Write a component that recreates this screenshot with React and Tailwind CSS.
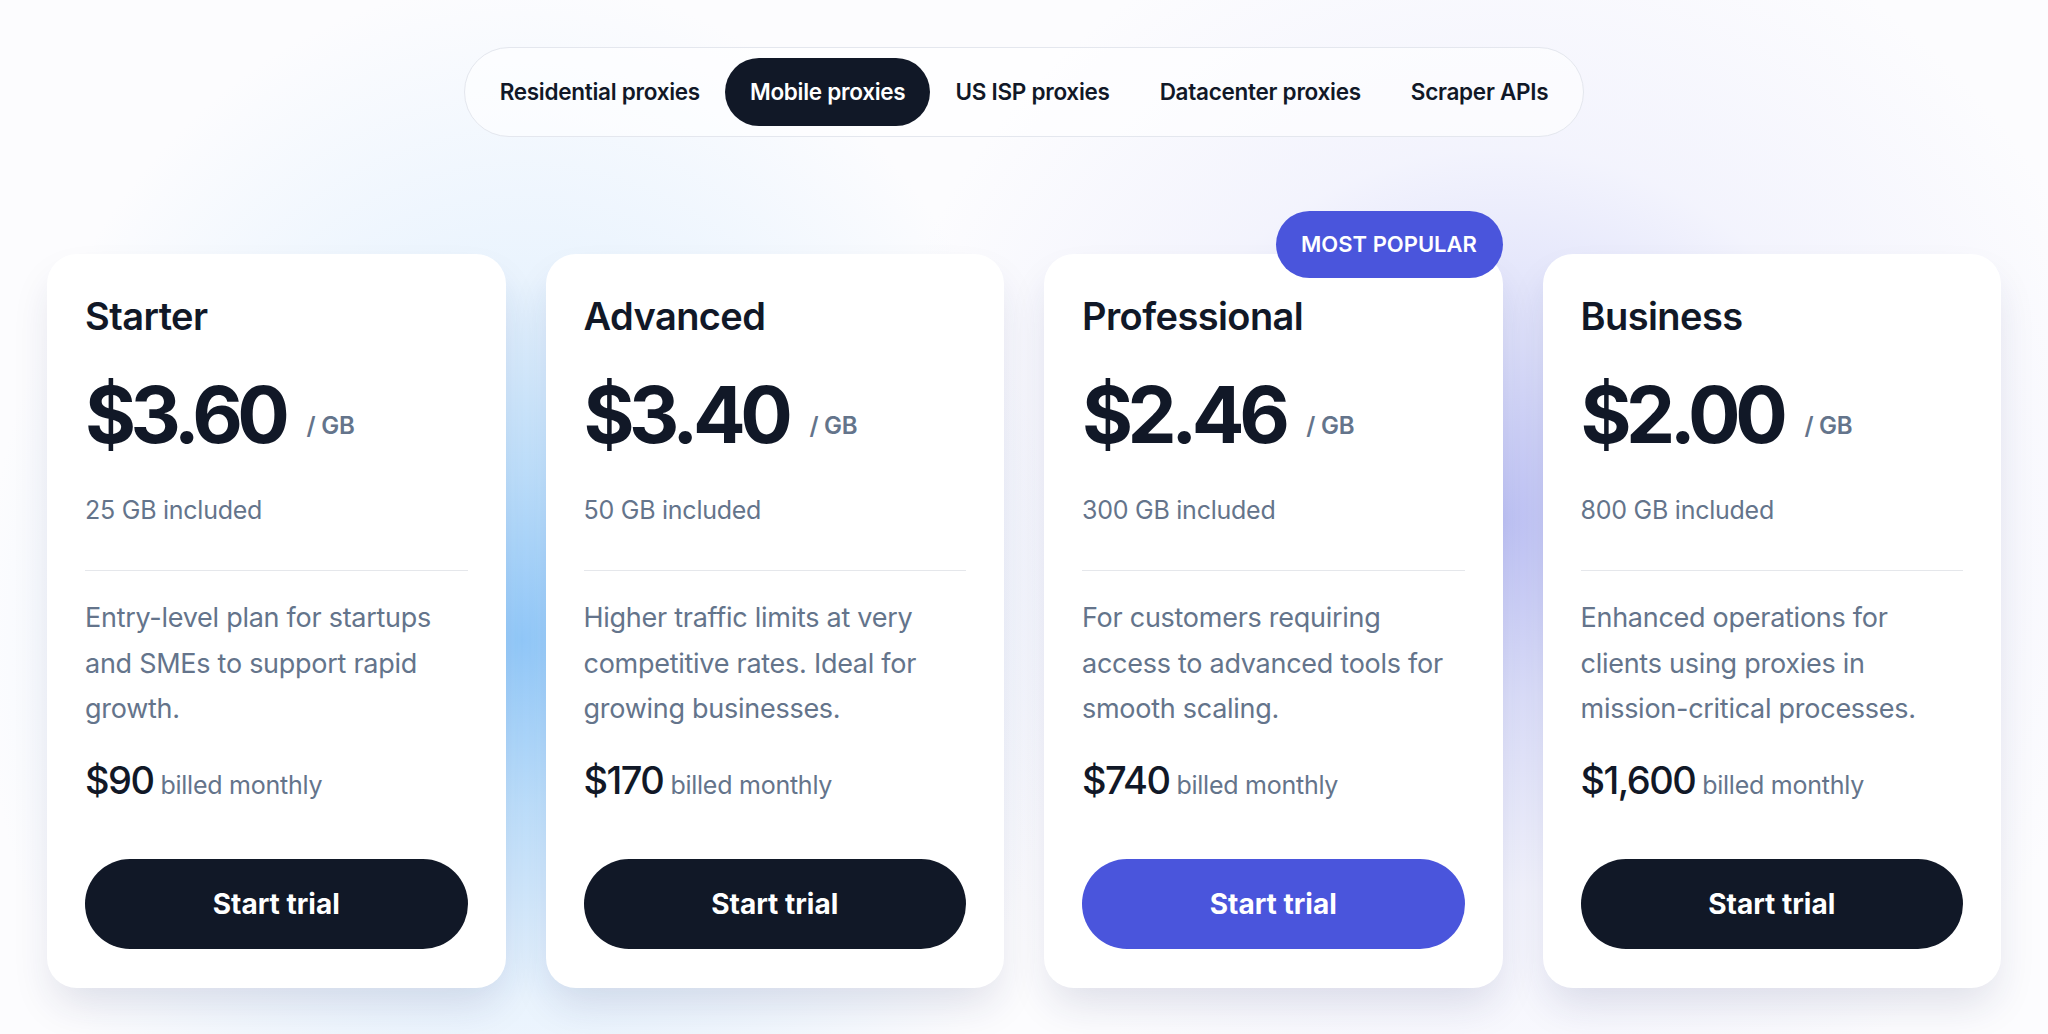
import React, { useState } from "react";

const tabs = ["Residential proxies", "Mobile proxies", "US ISP proxies", "Datacenter proxies", "Scraper APIs"];

const plans = [
  {
    name: "Starter",
    price: "$3.60",
    included: "25 GB included",
    lines: ["Entry-level plan for startups", "and SMEs to support rapid", "growth."],
    monthly: "$90",
  },
  {
    name: "Advanced",
    price: "$3.40",
    included: "50 GB included",
    lines: ["Higher traffic limits at very", "competitive rates. Ideal for", "growing businesses."],
    monthly: "$170",
  },
  {
    name: "Professional",
    price: "$2.46",
    included: "300 GB included",
    lines: ["For customers requiring", "access to advanced tools for", "smooth scaling."],
    monthly: "$740",
    popular: true,
  },
  {
    name: "Business",
    price: "$2.00",
    included: "800 GB included",
    lines: ["Enhanced operations for", "clients using proxies in", "mission-critical processes."],
    monthly: "$1,600",
  },
];

const PlanCard = ({ plan }) => {
  return (
    <div className="relative flex flex-col rounded-[30px] bg-white px-[38px] pt-[40px] pb-[39px] shadow-[0_22px_40px_-6px_rgba(30,40,90,0.13)]">
      {plan.popular && (
        <div className="absolute right-0 -top-[43px] flex h-[67px] w-[227px] items-center justify-center rounded-full bg-[#4a55dc] text-[22px] font-semibold text-white">
          MOST POPULAR
        </div>
      )}
      <h2 className="text-[38px] font-semibold leading-[44px] tracking-[-0.015em] text-[#111827]">{plan.name}</h2>

      <div className="mt-[38px] flex items-baseline">
        <span className="text-[78px] font-bold leading-none tracking-[-0.07em] text-[#111827]">{plan.price}</span>
        <span className="ml-[22px] -translate-y-[9px] text-[24px] font-semibold tracking-[-0.01em] text-[#64748b]">/ GB</span>
      </div>

      <p className="mt-[40px] text-[25px] leading-[32px] tracking-[-0.01em] text-[#64748b]">{plan.included}</p>

      <div className="mt-[44px] h-px bg-[#e5e7eb]" />

      <p className="mt-[24px] text-[27px] leading-[45.5px] tracking-[-0.01em] text-[#64748b]">
        {plan.lines.map((l, i) => (
          <React.Fragment key={i}>
            {l}
            {i < plan.lines.length - 1 && <br />}
          </React.Fragment>
        ))}
      </p>

      <div className="mt-[29px] flex items-baseline gap-[7px] leading-none">
        <span className="text-[38px] font-medium tracking-[-0.04em] text-[#111827]">{plan.monthly}</span>
        <span className="text-[25px] tracking-[-0.01em] text-[#64748b]">billed monthly</span>
      </div>

      <button
        className={
          plan.popular
            ? "mt-[60px] h-[90px] w-full rounded-full bg-[#4a55dc] text-[28px] font-bold text-white"
            : "mt-[60px] h-[90px] w-full rounded-full bg-[#111827] text-[28px] font-bold text-white"
        }
      >
        Start trial
      </button>
    </div>
  );
};

const App = () => {
  const [active, setActive] = useState("Mobile proxies");

  return (
    <div className="min-h-screen w-full overflow-hidden bg-[#fcfcfe] font-['Inter','Noto_Sans',sans-serif] [background-image:radial-gradient(ellipse_540px_660px_at_522px_640px,rgba(148,203,251,1)_0%,rgba(165,213,252,0.7)_25%,rgba(200,228,253,0.35)_55%,transparent_100%),radial-gradient(ellipse_640px_640px_at_1500px_520px,rgba(192,196,246,1)_0%,rgba(204,208,248,0.65)_28%,rgba(224,226,251,0.32)_58%,transparent_100%)]">
      <div className="flex justify-center pt-[47px]">
        <div className="flex items-center rounded-full border border-[#e4e7ee] bg-white/60 p-[10px]">
          {tabs.map((t) => (
            <button
              key={t}
              onClick={() => setActive(t)}
              className={
                t === active
                  ? "h-[68px] rounded-full bg-[#111827] px-[25px] text-[22.5px] font-semibold tracking-[-0.012em] text-white"
                  : "h-[68px] rounded-full px-[25px] text-[22.5px] font-semibold tracking-[-0.012em] text-[#111827]"
              }
            >
              {t}
            </button>
          ))}
        </div>
      </div>

      <div className="mt-[117px] grid grid-cols-4 gap-[40px] px-[47px] pb-[47px]">
        {plans.map((p) => (
          <PlanCard key={p.name} plan={p} />
        ))}
      </div>
    </div>
  );
};

export default App;
